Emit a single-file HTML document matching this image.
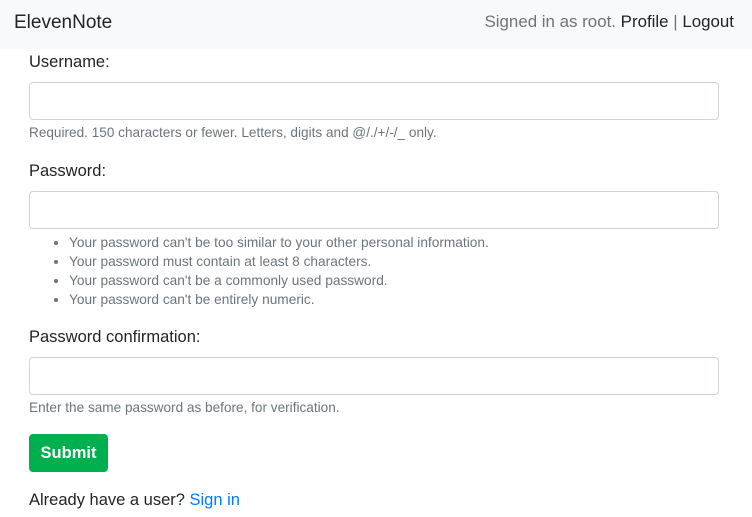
<!DOCTYPE html>
<html><head><style>
body{margin:0;width:752px;height:517px;background:#fff;font-family:"Liberation Sans",sans-serif;color:#212529;position:relative;overflow:hidden}
.a{position:absolute;white-space:nowrap}
.nav{position:absolute;left:0;top:0;width:752px;height:49px;background:#f8f9fa}
.lbl{font-size:16.5px}
.inp{position:absolute;left:29px;width:688px;height:36px;border:1px solid #ced4da;border-radius:4px;background:#fff}
.help{font-size:13.6px;color:#6c757d}
ul{position:absolute;left:29px;top:233px;margin:0;padding-left:40px;font-size:13.7px;color:#6c757d;line-height:19px}
</style></head><body>
<div class="nav"></div>
<div class="a" style="left:14px;top:12px;font-size:19px">ElevenNote</div>
<div class="a" style="right:18px;top:12px;font-size:16.9px"><span style="color:#6c757d">Signed in as root.</span> Profile <span style="color:#6c757d">|</span> Logout</div>
<div class="a lbl" style="left:29px;top:53px">Username:</div>
<div class="inp" style="top:82px"></div>
<div class="a help" style="left:29px;top:125px">Required. 150 characters or fewer. Letters, digits and @/./+/-/_ only.</div>
<div class="a lbl" style="left:29px;top:162px">Password:</div>
<div class="inp" style="top:191px"></div>
<ul>
<li>Your password can't be too similar to your other personal information.</li>
<li>Your password must contain at least 8 characters.</li>
<li>Your password can't be a commonly used password.</li>
<li>Your password can't be entirely numeric.</li>
</ul>
<div class="a lbl" style="left:29px;top:328px">Password confirmation:</div>
<div class="inp" style="top:357px"></div>
<div class="a help" style="left:29px;top:400px">Enter the same password as before, for verification.</div>
<div class="a" style="left:29px;top:434px;width:79px;height:38px;background:#00b04f;border-radius:4px;color:#fff;font-weight:bold;font-size:16.5px;line-height:39px;text-align:center">Submit</div>
<div class="a lbl" style="left:29px;top:491px">Already have a user? <span style="color:#007bff">Sign in</span></div>
</body></html>
